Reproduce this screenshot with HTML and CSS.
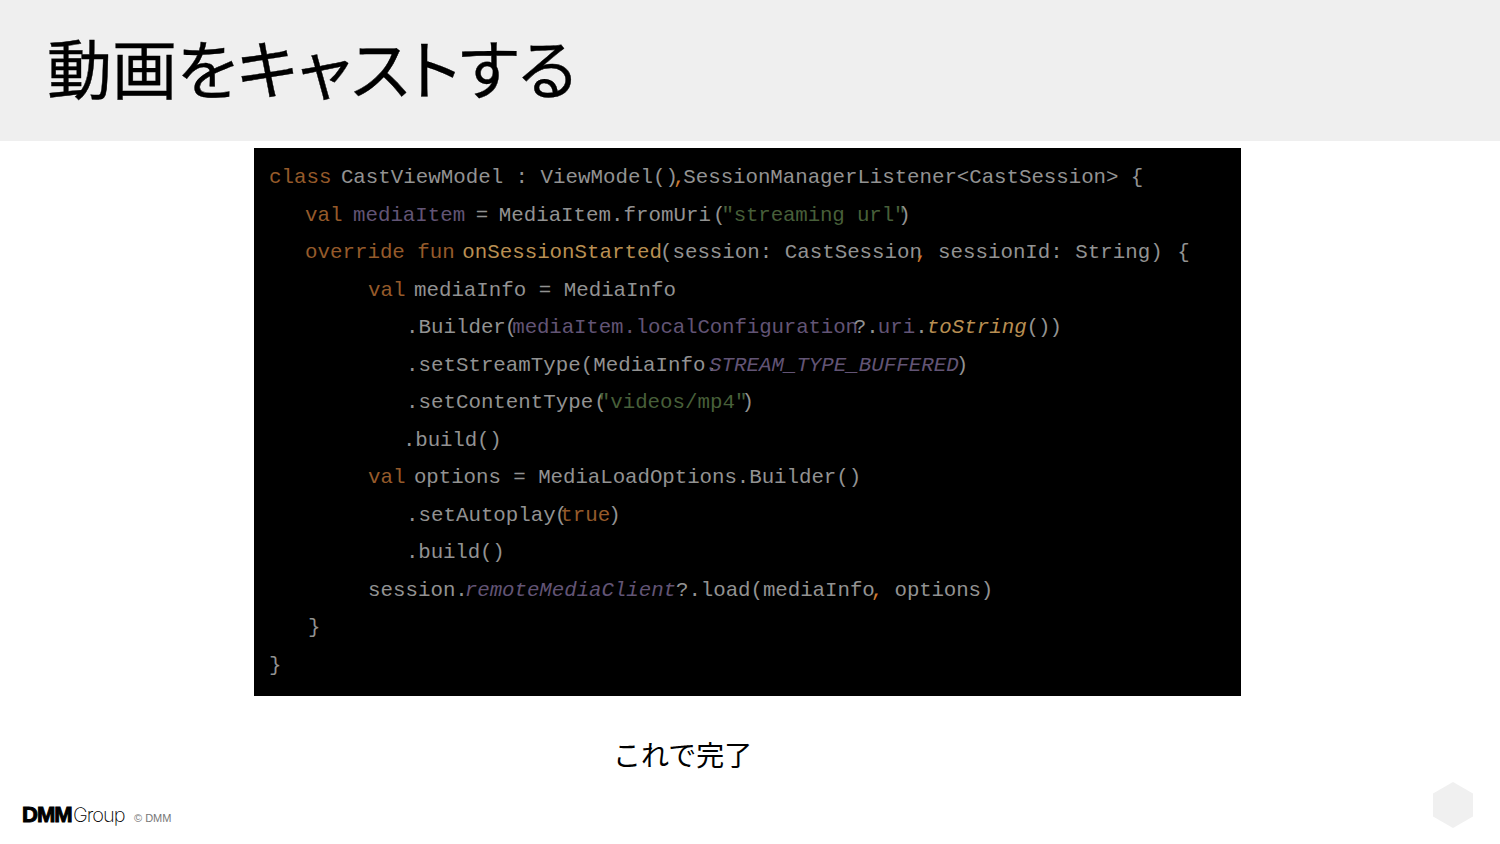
FILE: index.html
```html
<!DOCTYPE html>
<html lang="ja">
<head>
<meta charset="utf-8">
<title>動画をキャストする</title>
<link rel="stylesheet" href="styles.css">
</head>
<body>
<main class="slide">
  <header class="head"><h1 class="title">動画をキャストする</h1></header>
  <section class="code">
    <div class="ln i269"><span class="k">class</span> <span class="m3">CastViewModel : </span><span>ViewModel()</span><span class="cm m5">,</span><span class="m2 t1">SessionManagerListener&lt;CastSession&gt; {</span></div>
    <div class="ln i305"><span class="k">val</span> <span class="p m2">mediaItem</span><span class="m2"> = </span><span class="m2">MediaItem.fromUri</span><span class="m-2">(</span><span class="s m4 t2">"streaming url"</span><span class="m8">)</span></div>
    <div class="ln i305"><span class="k">override fun</span> <span class="f m5">onSessionStarted</span><span class="m2">(session: CastSession</span><span class="cm m7">,</span><span class="m2"> sessionId: String) </span><span class="m-2">{</span></div>
    <div class="ln i368"><span class="k">val</span> <span class="m4">mediaInfo = MediaInfo</span></div>
    <div class="ln i406"><span>.Builder</span><span class="m1">(</span><span class="p m5 t3">mediaItem.localConfiguration</span><span class="m4">?.</span><span class="p m1">uri</span>.<span class="f it m1">toString</span><span class="t4">())</span></div>
    <div class="ln i406"><span>.setStreamType(MediaInfo.</span><span class="p it m9">STREAM_TYPE_BUFFERED</span><span class="m3">)</span></div>
    <div class="ln i406"><span>.setContentType</span><span class="m-1">(</span><span class="s m9">"videos/mp4"</span><span class="m6">)</span></div>
    <div class="ln i403 t2">.build()</div>
    <div class="ln i368"><span class="k">val</span> <span class="m4 t5">options = MediaLoadOptions.Builder()</span></div>
    <div class="ln i406"><span>.setAutoplay</span><span class="m1">(</span><span class="k m7">true</span><span class="m2">)</span></div>
    <div class="ln i406 t2">.build()</div>
    <div class="ln i368">session.<span class="p it m3 t5">remoteMediaClient</span><span class="t5">?.load(mediaInfo</span><span class="cm m4">,</span><span class="m1 t2"> options)</span></div>
    <div class="ln i308">}</div>
    <div class="ln i269">}</div>
  </section>
  <p class="note">これで完了</p>
  <footer class="foot">
    <div class="brand">
      <span class="dmm">DMM</span><span class="group">Group</span><span class="copy">© DMM</span>
    </div>
    <svg class="hex" viewBox="0 0 40 46" width="40" height="46" aria-hidden="true"><path d="M20 0 L40 11.5 V34.5 L20 46 L0 34.5 V11.5 Z"/></svg>
  </footer>
</main>
</body>
</html>
```

FILE: styles.css
```css
* { box-sizing: border-box; }
html, body { margin: 0; padding: 0; background: #fff; }
.slide { width: 1500px; height: 844px; overflow: hidden; display: flex; flex-direction: column; background: #fff; font-family: "Noto Sans CJK JP", sans-serif; }
.head { height: 141px; background: #efefef; padding: 18px 0 0 47px; flex: none; }
.title { margin: 0; font-size: 65px; line-height: 96px; font-weight: 400; color: #000; font-feature-settings: "palt"; white-space: nowrap; -webkit-text-stroke: 0.4px #000; }
.code { width: 987px; height: 548px; margin: 7px 0 0 254px; padding-top: 11px; background: #000; flex: none; font-family: "Liberation Mono", monospace; font-size: 20.8px; color: #929292; }
.ln { height: 37.5px; line-height: 37.5px; white-space: pre; }
.i269 { padding-left: 15px; }
.i305 { padding-left: 51px; }
.i308 { padding-left: 54px; }
.i368 { padding-left: 114px; }
.i403 { padding-left: 149px; }
.i406 { padding-left: 152px; }
.k { color: #955a2a; }
.cm { color: #cf7a30; }
.p { color: #625475; }
.s { color: #475f39; }
.f { color: #b98f52; }
.it { font-style: italic; }
.m-2 { margin-left: 2px; }
.m-1 { margin-left: 1px; }
.m1 { margin-left: -1px; }
.m2 { margin-left: -2px; }
.m3 { margin-left: -3px; }
.m4 { margin-left: -4px; }
.m5 { margin-left: -5px; }
.m6 { margin-left: -6px; }
.m7 { margin-left: -7px; }
.m8 { margin-left: -8px; }
.m9 { margin-left: -9px; }
.t1 { letter-spacing: -0.05px; }
.t2 { letter-spacing: -0.15px; }
.t3 { letter-spacing: -0.14px; }
.t4 { letter-spacing: -1px; }
.t5 { letter-spacing: -0.06px; }
.note { margin: 41px 0 0 613px; font-size: 28px; line-height: 34px; color: #000; }
.foot { display: flex; justify-content: space-between; align-items: center; padding: 0 27px 0 22px; margin-top: 11px; height: 46px; }
.brand { display: flex; align-items: baseline; font-family: "Liberation Sans", sans-serif; color: #000; margin-top: 20px; }
.dmm { font-weight: 700; font-size: 22px; letter-spacing: -1px; width: 51px; line-height: 20px; -webkit-text-stroke: 1px #000; }
.group { font-family: Inter, sans-serif; font-weight: 200; font-size: 20px; line-height: 20px; letter-spacing: -1px; width: 61px; }
.copy { font-size: 11px; color: #777; }
.hex { fill: #f0f0f0; display: block; }
```
